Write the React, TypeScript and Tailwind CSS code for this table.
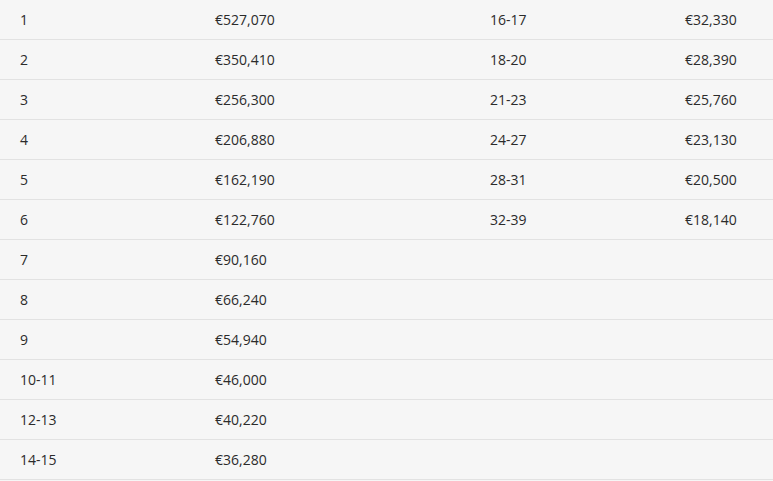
const ROWS: [string, string, string, string][] = [
  ["1", "€527,070", "16-17", "€32,330"],
  ["2", "€350,410", "18-20", "€28,390"],
  ["3", "€256,300", "21-23", "€25,760"],
  ["4", "€206,880", "24-27", "€23,130"],
  ["5", "€162,190", "28-31", "€20,500"],
  ["6", "€122,760", "32-39", "€18,140"],
  ["7", "€90,160", "", ""],
  ["8", "€66,240", "", ""],
  ["9", "€54,940", "", ""],
  ["10-11", "€46,000", "", ""],
  ["12-13", "€40,220", "", ""],
  ["14-15", "€36,280", "", ""],
];

export default function App() {
  return (
    <div className="min-h-screen w-full bg-[#f6f6f6] font-['Open_Sans',sans-serif] text-[14px] text-[#2b2b2b]">
      {ROWS.map((row, i) => (
        <div
          key={i}
          className="grid h-10 grid-cols-[195px_275px_195px_1fr] items-center border-b border-[#e2e2e2]"
        >
          {row.map((cell, j) => (
            <div key={j} className="px-5 leading-[39px]">
              {cell}
            </div>
          ))}
        </div>
      ))}
    </div>
  );
}
